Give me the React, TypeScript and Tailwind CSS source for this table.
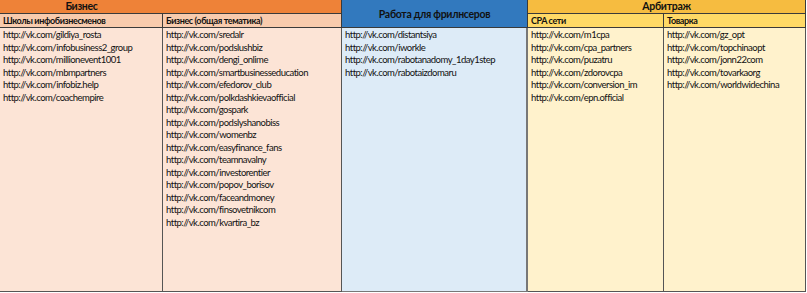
const col1 = [
  "http://vk.com/gildiya_rosta",
  "http://vk.com/infobusiness2_group",
  "http://vk.com/millionevent1001",
  "http://vk.com/mbmpartners",
  "http://vk.com/infobiz.help",
  "http://vk.com/coachempire",
];

const col2 = [
  "http://vk.com/sredalr",
  "http://vk.com/podslushbiz",
  "http://vk.com/dengi_onlime",
  "http://vk.com/smartbusinesseducation",
  "http://vk.com/efedorov_club",
  "http://vk.com/polkdashkievaofficial",
  "http://vk.com/gospark",
  "http://vk.com/podslyshanobiss",
  "http://vk.com/womenbz",
  "http://vk.com/easyfinance_fans",
  "http://vk.com/teamnavalny",
  "http://vk.com/investorentier",
  "http://vk.com/popov_borisov",
  "http://vk.com/faceandmoney",
  "http://vk.com/finsovetnikcom",
  "http://vk.com/kvartira_bz",
];

const col3 = [
  "http://vk.com/distantsiya",
  "http://vk.com/iworkle",
  "http://vk.com/rabotanadomy_1day1step",
  "http://vk.com/rabotaizdomaru",
];

const col4 = [
  "http://vk.com/m1cpa",
  "http://vk.com/cpa_partners",
  "http://vk.com/puzatru",
  "http://vk.com/zdorovcpa",
  "http://vk.com/conversion_im",
  "http://vk.com/epn.official",
];

const col5 = [
  "http://vk.com/gz_opt",
  "http://vk.com/topchinaopt",
  "http://vk.com/jonn22com",
  "http://vk.com/tovarkaorg",
  "http://vk.com/worldwidechina",
];

const Links = ({ items }: { items: string[] }) => (
  <div className="flex flex-col pt-[1px] pl-[3px]">
    {items.map((s) => (
      <div key={s} className="h-[12.5px] leading-[12.5px] whitespace-nowrap">
        {s}
      </div>
    ))}
  </div>
);

export default function App() {
  return (
    <div className="w-[807px] h-[293px] bg-white font-['Lato',sans-serif] text-[9.5px] tracking-[-0.5px] text-[#111]">
      <div className="grid grid-cols-[163px_179px_186px_136px_142px] grid-rows-[14px_14px_264px]">
        <div className="col-span-2 bg-[#EE8238] border-r border-b border-[#3a3a3a] flex items-center">
          <div className="w-[163px] text-center font-bold text-[10.5px] tracking-[-0.3px]">Бизнес</div>
        </div>
        <div className="row-span-2 bg-[#3279BE] border-r border-b border-[#3a3a3a] flex items-center justify-center font-bold text-[10.5px] tracking-[-0.3px] pt-[2px]">
          Работа для фрилнсеров
        </div>
        <div className="col-span-2 bg-[#F6BC40] border-r border-b border-[#3a3a3a] flex items-center justify-center font-bold text-[10.5px] tracking-[-0.3px]">
          Арбитраж
        </div>

        <div className="bg-[#F8CBAD] border-r border-b border-[#3a3a3a] flex items-center pl-[3px] font-bold text-[9px] tracking-[-0.4px]">
          Школы инфобизнесменов
        </div>
        <div className="bg-[#F8CBAD] border-r border-b border-[#3a3a3a] flex items-center pl-[3px] font-bold text-[9px] tracking-[-0.4px]">
          Бизнес (общая тематика)
        </div>
        <div className="bg-[#FFD966] border-r border-b border-[#3a3a3a] flex items-center pl-[3px] font-bold text-[9px] tracking-[-0.4px]">
          CPA сети
        </div>
        <div className="bg-[#FFD966] border-r border-b border-[#3a3a3a] flex items-center pl-[3px] font-bold text-[9px] tracking-[-0.4px]">
          Товарка
        </div>

        <div className="bg-[#FCE4D6] border-r border-b border-[#555]">
          <Links items={col1} />
        </div>
        <div className="bg-[#FCE4D6] border-r border-b border-[#555]">
          <Links items={col2} />
        </div>
        <div className="bg-[#DDEBF7] border-r-2 border-b border-[#777]">
          <Links items={col3} />
        </div>
        <div className="bg-[#FFF2CC] border-r border-b border-[#555]">
          <Links items={col4} />
        </div>
        <div className="bg-[#FFF2CC] border-r border-b border-[#555]">
          <Links items={col5} />
        </div>
      </div>
    </div>
  );
}
